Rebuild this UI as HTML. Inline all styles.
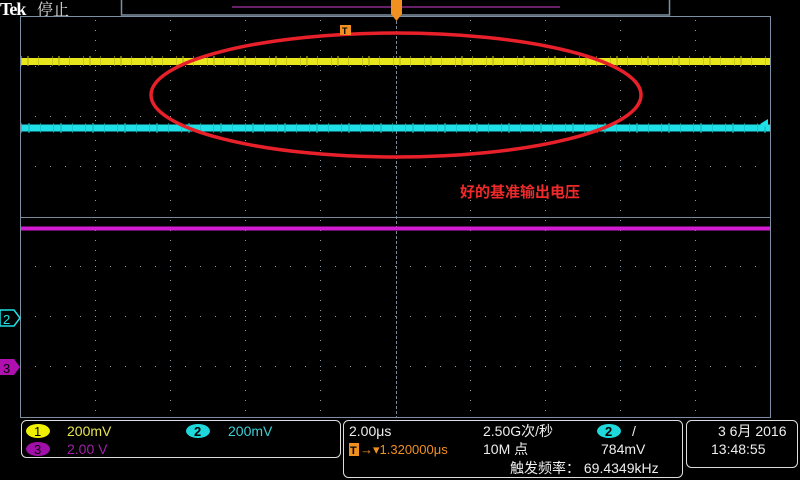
<!DOCTYPE html>
<html><head><meta charset="utf-8"><style>
html,body{margin:0;padding:0;background:#000;width:800px;height:480px;overflow:hidden}
svg{display:block}
text{font-family:"Liberation Sans","Noto Sans CJK SC",sans-serif}
</style></head><body>
<svg width="800" height="480" viewBox="0 0 800 480" xmlns="http://www.w3.org/2000/svg">
<rect width="800" height="480" fill="#000"/>
<text x="0" y="15" font-size="18" fill="#fff" font-weight="bold" style="font-family:'Liberation Serif',serif;letter-spacing:-1px">Tek</text>
<text x="37" y="15" font-size="16" fill="#ddd" style="font-family:'Noto Serif CJK SC','Noto Sans CJK SC',serif">停止</text>
<rect x="121.5" y="-1" width="548" height="16" fill="none" stroke="#7d8fa3" stroke-width="1.5"/>
<line x1="232" y1="7" x2="560" y2="7" stroke="#8a2a8a" stroke-width="1.5"/>
<rect x="20.5" y="16.5" width="750" height="401" fill="none" stroke="#7d8fa3" stroke-width="1"/>
<g stroke="#8899aa" stroke-width="1" stroke-dasharray="1,9">
<line x1="95.5" y1="20" x2="95.5" y2="416"/><line x1="170.5" y1="20" x2="170.5" y2="416"/><line x1="245.5" y1="20" x2="245.5" y2="416"/><line x1="320.5" y1="20" x2="320.5" y2="416"/>
<line x1="470.5" y1="20" x2="470.5" y2="416"/><line x1="545.5" y1="20" x2="545.5" y2="416"/><line x1="620.5" y1="20" x2="620.5" y2="416"/><line x1="695.5" y1="20" x2="695.5" y2="416"/>
</g>
<g stroke="#8899aa" stroke-width="1" stroke-dasharray="1,14">
<line x1="20" y1="66.5" x2="770" y2="66.5"/><line x1="20" y1="116.5" x2="770" y2="116.5"/><line x1="20" y1="166.5" x2="770" y2="166.5"/>
<line x1="20" y1="266.5" x2="770" y2="266.5"/><line x1="20" y1="316.5" x2="770" y2="316.5"/><line x1="20" y1="366.5" x2="770" y2="366.5"/>
</g>
<line x1="396.5" y1="16" x2="396.5" y2="418" stroke="#7a8a9a" stroke-width="1" stroke-dasharray="3,2"/>
<line x1="20" y1="217.5" x2="771" y2="217.5" stroke="#7a8a9a" stroke-width="1"/>
<line x1="21" y1="61.5" x2="770" y2="61.5" stroke="#e8e61c" stroke-width="7"/>
<line x1="21" y1="61" x2="770" y2="61" stroke="#b8b810" stroke-width="10" stroke-dasharray="1,5,2,9,1,13" opacity="0.6"/>
<line x1="21" y1="128" x2="770" y2="128" stroke="#1ee0e6" stroke-width="7"/>
<line x1="21" y1="128" x2="770" y2="128" stroke="#18b8c0" stroke-width="10" stroke-dasharray="1,6,2,10,1,12" opacity="0.6"/>
<line x1="21" y1="228.5" x2="770" y2="228.5" stroke="#d21cd2" stroke-width="4"/>
<polygon points="760,124 768,119 768,128" fill="#1ee0e6"/>
<ellipse cx="396" cy="95" rx="245" ry="62" fill="none" stroke="#e8202a" stroke-width="3.5"/>
<text x="460" y="197" font-size="15" fill="#ee2a2a" font-weight="bold">好的基准输出电压</text>
<rect x="340" y="25" width="11" height="10" fill="#f09020"/>
<text x="342" y="34" font-size="9" fill="#000" font-weight="bold">T</text>
<rect x="391" y="0" width="11" height="14" fill="#f09020"/>
<polygon points="391,14 402,14 396.5,21" fill="#f09020"/>
<polygon points="0,310 14,310 20,318 14,326 0,326" fill="#000" stroke="#1ee0e6" stroke-width="1.5"/>
<text x="3" y="324" font-size="13" fill="#1ee0e6">2</text>
<polygon points="0,359 14,359 20,367 14,375 0,375" fill="#b010b0"/>
<text x="3" y="373" font-size="13" fill="#000">3</text>
<rect x="21.5" y="420.5" width="319" height="37" rx="5" fill="none" stroke="#ddd" stroke-width="1"/>
<rect x="343.5" y="420.5" width="339" height="57" rx="5" fill="none" stroke="#ddd" stroke-width="1"/>
<rect x="686.5" y="420.5" width="111" height="47" rx="5" fill="none" stroke="#ddd" stroke-width="1"/>
<g font-size="14">
<ellipse cx="38" cy="431" rx="12" ry="7" fill="#f0f000"/>
<text x="34" y="436" font-size="13" fill="#000">1</text>
<text x="67" y="436" fill="#e8e650">200mV</text>
<ellipse cx="198" cy="431" rx="12" ry="7" fill="#1ed8dc"/>
<text x="194" y="436" font-size="13" fill="#000" font-weight="bold">2</text>
<text x="228" y="436" fill="#3ed0d6">200mV</text>
<ellipse cx="38" cy="449" rx="12" ry="7" fill="#a010a8"/>
<text x="34" y="454" font-size="13" fill="#000">3</text>
<text x="67" y="454" fill="#a020a8">2.00 V</text>
<text x="349" y="436" fill="#eee">2.00μs</text>
<rect x="349" y="443" width="10" height="13" fill="#f09020"/>
<text x="350" y="454" font-size="11" fill="#000" font-weight="bold">T</text>
<text x="360" y="454" font-size="13" fill="#f09020">→▾1.320000μs</text>
<text x="483" y="436" fill="#eee">2.50G次/秒</text>
<text x="483" y="454" fill="#eee">10M 点</text>
<ellipse cx="609" cy="431" rx="12" ry="7" fill="#1ed8dc"/>
<text x="605" y="436" font-size="13" fill="#000" font-weight="bold">2</text>
<text x="632" y="436" fill="#eee">/</text>
<text x="601" y="454" fill="#eee">784mV</text>
<text x="510" y="473" fill="#eee">触发频率： 69.4349kHz</text>
<text x="718" y="436" fill="#eee">3 6月 2016</text>
<text x="711" y="454" fill="#eee">13:48:55</text>
</g>
</svg>
</body></html>
